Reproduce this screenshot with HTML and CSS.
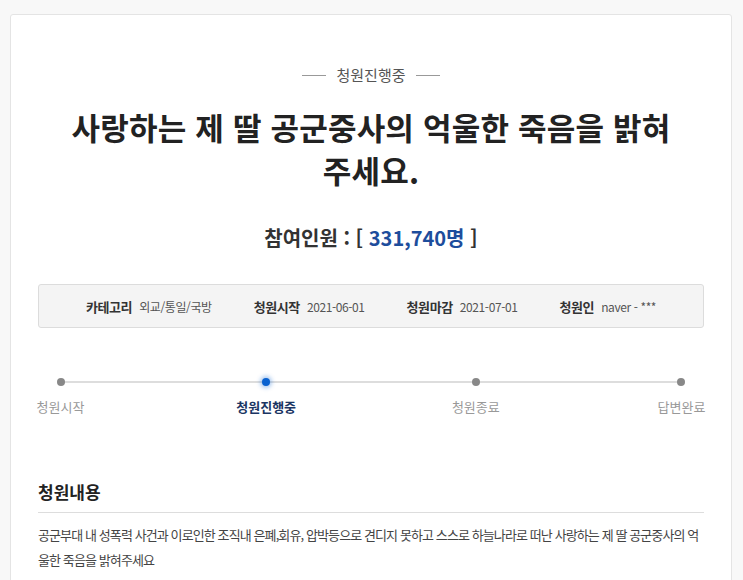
FILE: index.html
```html
<!DOCTYPE html>
<html lang="ko">
<head>
  <meta charset="utf-8">
  <meta content="initial-scale=1" name="viewport">
  <title>청원진행중 - 사랑하는 제 딸 공군중사의 억울한 죽음을 밝혀주세요.</title>
  <link rel="stylesheet" href="styles.css">
</head>
<body>
  <div class="petition">
    <p class="status"><span>청원진행중</span></p>
    <h1 class="title">사랑하는 제 딸 공군중사의 억울한 죽음을 밝혀<br>주세요.</h1>
    <h2 class="count">참여인원 : [ <span>331,740명</span> ]</h2>
    <ul class="info">
      <li><b>카테고리</b>외교/통일/국방</li>
      <li><b>청원시작</b>2021-06-01</li>
      <li><b>청원마감</b>2021-07-01</li>
      <li><b>청원인</b>naver - ***</li>
    </ul>
    <ol class="steps">
      <li><i></i>청원시작</li>
      <li class="on"><i></i>청원진행중</li>
      <li><i></i>청원종료</li>
      <li><i></i>답변완료</li>
    </ol>
    <h3 class="section">청원내용</h3>
    <p class="content">공군부대 내 성폭력 사건과 이로인한 조직내 은폐,회유, 압박등으로 견디지 못하고 스스로 하늘나라로 떠난 사랑하는 제 딸 공군중사의 억울한 죽음을 밝혀주세요</p>
  </div>
</body>
</html>
```

FILE: styles.css
```css
html, body { background: #f8f8f8; margin: 0; font-family: "Noto Sans CJK KR", "Noto Sans", sans-serif; color: #333; }
.petition { background: #fff; border: solid 1px #e4e4e4; border-radius: 3px; box-sizing: border-box; margin: 14px 0 0 10px; padding: 50px 27px 20px; width: 722px; height: 580px; }
.status { align-items: center; color: #555; display: flex; font-size: 15px; gap: 10px; justify-content: center; line-height: 20px; margin: 0; }
.status::before, .status::after { background: #999; content: ''; height: 1px; width: 24px; }
.title { color: #222; font-size: 31px; font-weight: 700; letter-spacing: 0.2px; line-height: 43px; margin: 20px 0 0; text-align: center; }
.count { color: #333; font-size: 20px; font-weight: 700; line-height: 28px; margin: 33px 0 0; text-align: center; }
.count span { color: #1d4d9c; }
.info { align-items: center; background: #f4f4f4; border: solid 1px #dcdcdc; border-radius: 3px; box-sizing: border-box; display: flex; gap: 42px; height: 44px; justify-content: center; list-style: none; margin: 32px 0 0; padding: 0; }
.info li { color: #555; font-size: 12px; letter-spacing: -0.4px; }
.info b { color: #333; font-size: 13px; margin-right: 7px; }
.steps { display: flex; justify-content: space-between; list-style: none; margin: 50px 0 0; padding: 0; position: relative; }
.steps::before { background: #ddd; content: ''; height: 2px; left: 22px; position: absolute; right: 22px; top: 3px; }
.steps li { align-items: center; color: #999; display: flex; flex-direction: column; font-size: 13px; gap: 12px; line-height: 18px; position: relative; width: 45px; white-space: nowrap; }
.steps i { background: #888; border-radius: 50%; height: 8px; width: 8px; }
.steps .on { color: #1b3563; font-weight: 700; margin-left: -4px; }
.steps .on i { background: #0a62d0; box-shadow: 0 0 4px 2px rgba(10, 98, 208, .35); }
.steps li:nth-child(3) { margin-right: -4px; }
.section { border-bottom: solid 1px #ddd; color: #222; font-size: 17px; font-weight: 700; line-height: 24px; margin: 64px 0 0; padding-bottom: 8px; }
.content { color: #444; font-size: 13px; letter-spacing: -0.9px; line-height: 25px; margin: 9px 0 0; }
```
